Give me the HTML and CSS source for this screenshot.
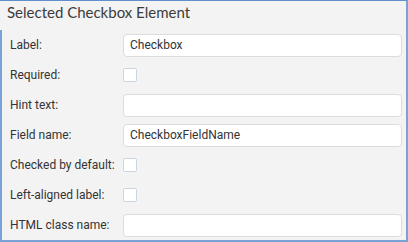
FILE: index.html
```html
<!DOCTYPE html>
<html lang="en">
<head>
    <meta charset="UTF-8">
    <meta name="viewport" content="width=device-width, initial-scale=1.0">
    <title>Selected Checkbox Element</title>
    <link rel="stylesheet" href="styles.css">
</head>
<body>
    <div class="panel">
        <h1 class="panel-title">Selected Checkbox Element</h1>

        <form class="props">
            <div class="row">
                <label for="label">Label:</label>
                <input type="text" id="label" class="text-field" value="Checkbox">
            </div>
            <div class="row">
                <label for="required">Required:</label>
                <span class="check" id="required"></span>
            </div>
            <div class="row">
                <label for="hint">Hint text:</label>
                <input type="text" id="hint" class="text-field">
            </div>
            <div class="row">
                <label for="fieldname">Field name:</label>
                <input type="text" id="fieldname" class="text-field" value="CheckboxFieldName">
            </div>
            <div class="row">
                <label for="checked">Checked by default:</label>
                <span class="check" id="checked"></span>
            </div>
            <div class="row">
                <label for="leftlabel">Left-aligned label:</label>
                <span class="check" id="leftlabel"></span>
            </div>
            <div class="row">
                <label for="classname">HTML class name:</label>
                <input type="text" id="classname" class="text-field">
            </div>
        </form>
    </div>
</body>
</html>
```

FILE: styles.css
```css
html, body {
    margin: 0;
    padding: 0;
}
body {
    width: 408px;
    height: 242px;
    overflow: hidden;
    background-color: #f3f3f3;
    font-family: Roboto, "Liberation Sans", sans-serif;
    color: #333;
}
.panel {
    box-sizing: border-box;
    height: 242px;
    border-top: 1px solid #5f8fcc;
    border-right: 2px solid #7aa2d6;
    border-bottom: 2px solid #7aa2d6;
}
.panel-title {
    margin: 0;
    height: 29px;
    padding-left: 7px;
    font-family: Lato, "Open Sans", sans-serif;
    font-size: 15px;
    font-weight: 400;
    line-height: 22px;
    color: #3c3c3c;
}
.props {
    box-sizing: border-box;
    height: 210px;
    border-left: 2px solid #7aa2d6;
    padding: 0 4px 0 8px;
    display: flex;
    flex-direction: column;
}
.row {
    height: 30px;
    display: flex;
    align-items: center;
}
label {
    width: 113px;
    font-size: 12px;
}
.text-field {
    box-sizing: border-box;
    flex: 1;
    height: 23px;
    margin: 0;
    padding: 0 6px;
    border: 1px solid #dcdcdc;
    border-radius: 4px;
    background: #fff;
    font-family: Roboto, "Liberation Sans", sans-serif;
    font-size: 12px;
    color: #333;
}
.check {
    box-sizing: border-box;
    width: 14px;
    height: 14px;
    border: 1px solid #c9d5e2;
    border-radius: 2px;
    background: #fff;
}
```
